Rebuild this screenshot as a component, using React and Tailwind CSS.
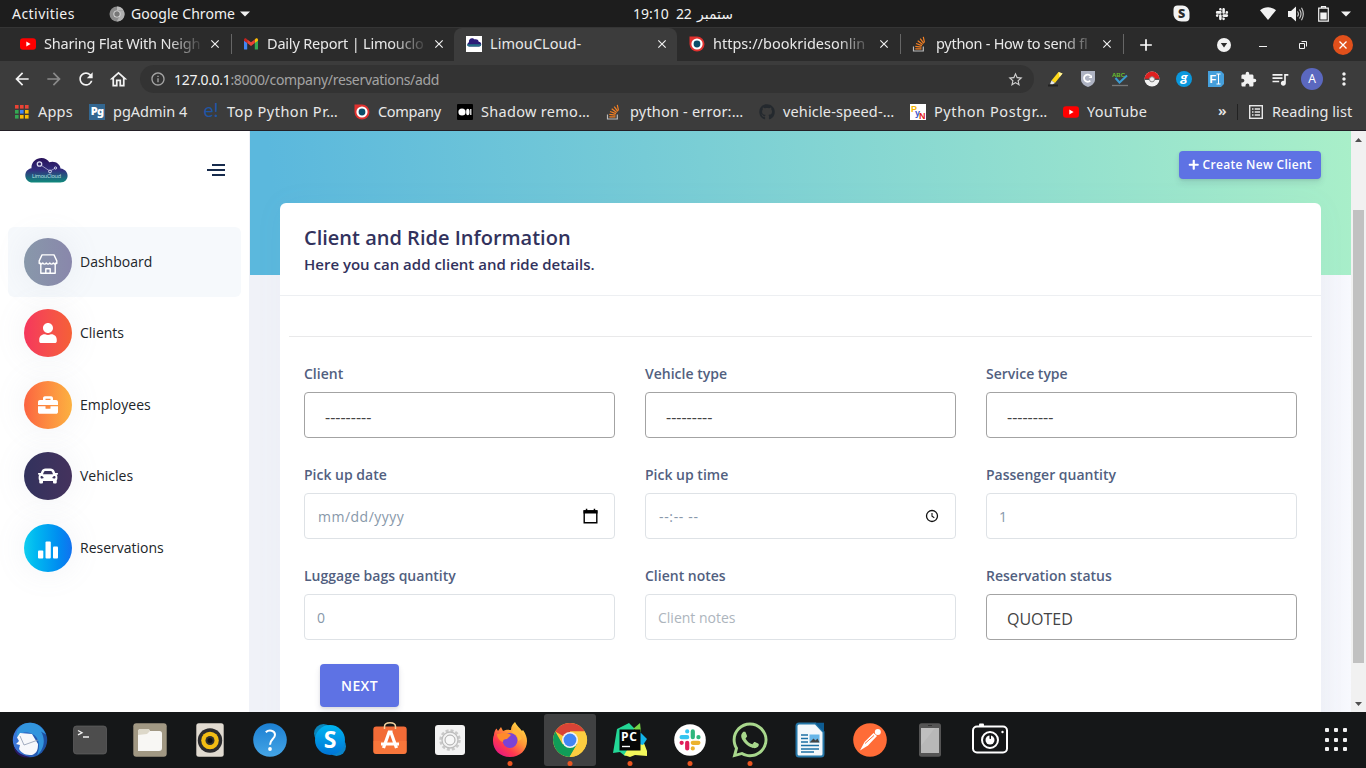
import React from "react";
import { FaPlus, FaUser, FaBriefcase, FaCar, FaGithub, FaSlack, FaWhatsapp } from "react-icons/fa";
import { MdArrowBack, MdArrowForward, MdRefresh, MdOutlineHome, MdInfoOutline, MdStarBorder, MdExtension, MdQueueMusic, MdMoreVert, MdClose, MdAdd } from "react-icons/md";

const UI = "font-['Noto_Sans','Open_Sans',sans-serif]";
const PAGE = "font-['Open_Sans','Noto_Sans',sans-serif]";

/* ---------- small site icons ---------- */
const YouTube = () => (
  <svg width="16" height="16" viewBox="0 0 16 16">
    <rect x="0" y="2.2" width="16" height="11.6" rx="3" fill="#f00" />
    <path d="M6.3 5.6v4.8L10.6 8z" fill="#fff" />
  </svg>
);
const Gmail = () => (
  <svg width="16" height="16" viewBox="0 0 16 16">
    <path d="M1 4.5v8.4c0 .3.3.6.6.6h2.6V6.6z" fill="#4285f4" />
    <path d="M15 4.5v8.4c0 .3-.3.6-.6.6h-2.6V6.6z" fill="#34a853" />
    <path d="M11.8 3.6V7L15 4.7V3.9c0-1.4-1.4-2-2.4-1.2z" fill="#fbbc04" />
    <path d="M4.2 7.1V3.4L8 6.3l3.8-2.9v3.7L8 9.9z" fill="#ea4335" />
    <path d="M1 4.7V3.9c0-1.4 1.4-2 2.4-1.2l.8.7v3.7z" fill="#c5221f" />
  </svg>
);
const CloudMini = () => (
  <svg width="16" height="16" viewBox="0 0 16 16">
    <rect width="16" height="16" fill="#fff" />
    <path d="M3.2 10.6A2.3 2.3 0 0 1 3 6.2 3.2 3.2 0 0 1 6 2.2c1.400 0 2.200.6 2.700 1.300C10.500 3 12.300 3.700 12.700 5.800 16 6 16 10.600 13 10.600z" fill="#2b1d78" />
    <path d="M1 8.300h14.200c0 1.300-.8 2.300-2.200 2.300H3.200C1.800 10.600 1 9.600 1 8.300z" fill="#246f86" />
  </svg>
);
const Ring = () => (
  <svg width="16" height="16" viewBox="0 0 16 16">
    <path d="M0.500 0.500H8a7.500 7.500 0 1 1-7.500 7.500z" fill="#e0312f" />
    <circle cx="8" cy="8" r="5.600" fill="#fff" />
    <circle cx="8" cy="8" r="3.400" fill="#0c4d68" />
  </svg>
);
const Stack = () => (
  <svg width="16" height="16" viewBox="0 0 16 16" fill="none">
    <path d="M1.500 10.500v4.500h9.800v-4.500" stroke="#bbb" strokeWidth="1.200" />
    <path d="M3.300 12.800h6.200M3.300 10.300l6.200 .8M4 7.500l5.900 2.100M5.700 4.800l5 3.700M8.200 2.600l3.600 4.800M11.300 .8l1.200 5.700" stroke="#f48024" strokeWidth="1.200" />
  </svg>
);
const Apps = () => (
  <svg width="16" height="16" viewBox="0 0 16 16">
    {["#ea4335", "#ea4335", "#ea4335", "#34a853", "#4285f4", "#fbbc04", "#34a853", "#fbbc04", "#fbbc04"].map((c, i) => (
      <rect key={i} x={1 + (i % 3) * 5} y={1 + Math.floor(i / 3) * 5} width="3.600" height="3.600" fill={c} />
    ))}
  </svg>
);
const PgAdmin = () => <span className="flex size-4 items-center justify-center bg-[#336791] pb-0.5 text-[11px] leading-none font-black tracking-[-0.8px] text-white">Pg</span>;
const Euro = () => <span className="-mt-1 w-4 text-center font-['Lato'] text-[19px] leading-4 text-[#1f56a5]">e!</span>;
const Medium = () => (
  <svg width="16" height="16" viewBox="0 0 16 16">
    <rect width="16" height="16" rx="1" fill="#000" />
    <circle cx="5" cy="8" r="3.600" fill="#fff" />
    <ellipse cx="10.800" cy="8" rx="1.700" ry="3.300" fill="#fff" />
    <rect x="13.200" y="5" width="1.200" height="6" fill="#fff" />
  </svg>
);
const PyN = () => (
  <svg width="16" height="16" viewBox="0 0 16 16" fontFamily="Liberation Sans" fontWeight="700">
    <rect width="16" height="16" fill="#fff" />
    <text x="1" y="8" fontSize="9" fill="#f5b400">P</text>
    <text x="5" y="11.500" fontSize="9" fill="#3d55cc">y</text>
    <text x="9" y="15" fontSize="9" fill="#e02020">N</text>
  </svg>
);

/* ---------- desktop top bar ---------- */
const SkypeTile = () => (
  <svg width="17" height="17" viewBox="0 0 17 17">
    <path d="M4.500.5h5C13 .5 16.500 3.500 16.500 8v4.500c0 2.500-1.500 4-4 4h-4C4 16.500.5 13 .5 9V4.500c0-2.500 1.500-4 4-4z" fill="#f2f2f2" />
    <text x="8.500" y="13" textAnchor="middle" fontSize="12.500" fontWeight="800" fontFamily="Open Sans" fill="#2b2b2b">S</text>
  </svg>
);
const TopBar = () => (
  <div className="flex h-[27px] shrink-0 items-center bg-[#1d1d1d] text-[14px] text-[#f2f2f2]">
    <div className="flex w-[633px] shrink-0 items-center pl-3">
      <span className="w-[97px] tracking-[0.450px]">Activities</span>
      <svg width="16" height="16" viewBox="0 0 16 16">
        <circle cx="8" cy="8" r="7.500" fill="#8b8b8b" />
        <path d="M8 .5a7.500 7.500 0 0 1 6.700 4H8z" fill="#bbb" />
        <path d="M14.800 4.700A7.500 7.500 0 0 1 7.600 15.500L11 9.500V4.700z" fill="#b0b0b0" />
        <circle cx="8" cy="8" r="3.600" fill="#ddd" />
        <circle cx="8" cy="8" r="2.700" fill="#777" />
      </svg>
      <span className="ml-1.5 w-[109px] tracking-[0.050px]">Google Chrome</span>
      <svg width="10" height="6" viewBox="0 0 10 6"><path d="M0 .5h10L5 5.500z" fill="#f2f2f2" /></svg>
    </div>
    <div className="flex w-[534px] shrink-0 items-center whitespace-nowrap">
      <span className="w-[43px]">19:10</span>
      <span className="w-[21px] tracking-[-0.300px]">22</span>
      <span className="font-['DejaVu_Sans'] text-[14px] leading-5" dir="rtl">ستمبر</span>
    </div>
    <div className="flex shrink-0 items-center pl-1.5">
      <span className="w-[42px]"><SkypeTile /></span>
      <span className="w-[45px]"><FaSlack size={14} color="#f2f2f2" /></span>
    </div>
    <div className="flex shrink-0 items-center gap-3">
      <svg width="16" height="13" viewBox="0 0 16 13"><path d="M0 3.300C4.500-.8 11.500-.8 16 3.300L8 13z" fill="#f2f2f2" /></svg>
      <svg width="16" height="16" viewBox="0 0 16 16" fill="none">
        <path d="M0 5h3l5-4.500v15L3 11H0z" fill="#f2f2f2" />
        <path d="M9.500 5.500q1.800 2.500 0 5M11.500 3.500q3 4.500 0 9M13.500 1.800q3.600 6.200 0 12.400" stroke="#d0d0d0" strokeWidth="1.100" />
      </svg>
      <svg width="11" height="16" viewBox="0 0 11 16" className="ml-0.5">
        <path d="M3.500 2V.7h4V2M.7 2.200h9.600v13H.7z" fill="none" stroke="#f2f2f2" strokeWidth="1.200" />
        <rect x="2.300" y="6.500" width="6.400" height="7" fill="#f2f2f2" />
      </svg>
      <svg width="10" height="6" viewBox="0 0 10 6"><path d="M0 .5h10L5 5.500z" fill="#f2f2f2" /></svg>
    </div>
  </div>
);

/* ---------- tab strip ---------- */
const tabs = [
  { icon: <YouTube />, title: "Sharing Flat With Neigh", tracking: "tracking-[-0.200px]", sep: true },
  { icon: <Gmail />, title: "Daily Report | Limouclo", tracking: "tracking-[-0.200px]" },
  { icon: <CloudMini />, title: "LimouCLoud-", tracking: "tracking-[0.050px]", active: true },
  { icon: <Ring />, title: "https://bookridesonlin", tracking: "tracking-[0px]", sep: true },
  { icon: <Stack />, title: "python - How to send fl", tracking: "tracking-[-0.280px]", sep: true },
];
const Tab = ({ icon, title, tracking, sep, active }) => (
  <div className={"flex h-[34px] w-[223px] shrink-0 items-center pb-px pl-3 " + (active ? "rounded-t-lg bg-[#3c3c3c]" : "")}>
    <span className="w-6 shrink-0">{icon}</span>
    <span className={"w-[160px] whitespace-nowrap text-[14.500px] " + tracking + (active ? "" : " mask-[linear-gradient(to_right,#000_78%,transparent_101%)]")}>{title}</span>
    <MdClose size={14} className="ml-[5px] shrink-0" color="#f2f2f2" />
    {sep && <span className="-mr-px ml-[9px] h-5 w-px shrink-0 bg-[#666]" />}
  </div>
);
const TabStrip = () => (
  <div className="flex h-[34px] shrink-0 items-center border-t border-[#353535] bg-[#2b2b2b] pl-2 text-[#e8e8e8]">
    {tabs.map((t) => <Tab key={t.title} {...t} />)}
    <div className="ml-[13px] w-[82px] shrink-0"><MdAdd size={20} className="text-white" /></div>
    <div className="ml-[-1px] flex shrink-0 items-center">
      <svg width="14" height="14" viewBox="0 0 14 14"><circle cx="7" cy="7" r="7" fill="#f2f2f2" /><path d="M3.800 5h6.400L7 9.500z" fill="#2b2b2b" /></svg>
      <span className="mt-1 ml-7 h-px w-2 bg-[#f2f2f2]" />
      <svg width="8" height="8" viewBox="0 0 8 8" className="ml-8" fill="none" stroke="#f2f2f2"><path d="M.5 2.500h5v5h-5zM2.500 .5h5v5" /></svg>
      <svg width="20" height="20" viewBox="0 0 20 20" className="ml-[26px]"><circle cx="10" cy="10" r="10" fill="#e1501b" /><path d="M6.500 6.500l7 7M13.500 6.500l-7 7" stroke="#fff" strokeWidth="1.300" /></svg>
    </div>
  </div>
);

/* ---------- toolbar ---------- */
const Cell = ({ children }) => <span className="flex w-8 shrink-0 items-center justify-center">{children}</span>;
const extensions = [
  <svg width="16" height="16" viewBox="0 0 16 16"><path d="M3.500 9.500L10.500 1l4 1.500-7.500 9.500z" fill="#ffd91a" /><path d="M3.500 9.500l3.500 2.500-2.500 1.500-2.500-.2z" fill="#e8e8e8" /><path d="M10.500 1l4 1.500-3 3.700z" fill="#fff29c" /><path d="M0 14.500h10" stroke="#222" strokeWidth="2" /></svg>,
  <svg width="16" height="16" viewBox="0 0 16 16"><path d="M1 0h14v8.500c0 4-4 6.500-7 7.500-3-1-7-3.500-7-7.500z" fill="#aeb3c2" /><path d="M10.500 5A3.600 3.600 0 1 0 10.300 9.600" fill="none" stroke="#fff" strokeWidth="1.800" /><path d="M8.500 7h3.500v-3z" fill="#fff" /></svg>,
  <svg width="16" height="16" viewBox="0 0 16 16"><text x="0" y="5.500" fontSize="6" fontWeight="700" fontFamily="Liberation Sans" fill="#6abf2e">ABC</text><path d="M3.500 7l4 4.500L15 4.500" fill="none" stroke="#3b9bd0" strokeWidth="2" /><path d="M0 14.500h16" stroke="#777" strokeWidth="1.300" /></svg>,
  <svg width="16" height="16" viewBox="0 0 16 16"><circle cx="8" cy="8" r="7.500" fill="#f2f2f2" /><path d="M.5 8a7.500 7.500 0 0 1 15 0z" fill="#df2020" /><path d="M.5 8.300h15" stroke="#444" strokeWidth="1.200" /><circle cx="8" cy="8.300" r="2.600" fill="#eee" stroke="#888" /></svg>,
  <svg width="16" height="16" viewBox="0 0 16 16"><circle cx="8" cy="8" r="8" fill="#0a98dd" /><text x="8" y="11.300" textAnchor="middle" fontSize="14" fontWeight="900" fontStyle="italic" fontFamily="Lato" fill="#fff">g</text></svg>,
  <svg width="16" height="16" viewBox="0 0 16 16"><path d="M0 0h13l3 3v10l-3 3H0z" fill="#459fdb" /><text x="1.500" y="12" fontSize="11" fontWeight="700" fontFamily="Liberation Sans" fill="#fff">F</text><path d="M8.500 3h4M10.500 3v10M8.500 13h4" stroke="#fff" fill="none" /></svg>,
  <MdExtension size={17} color="#f2f2f2" />,
  <MdQueueMusic size={20} color="#f2f2f2" />,
  <span className="flex size-[22px] items-center justify-center rounded-full bg-[#5b68bf] text-[12px] leading-none text-white">A</span>,
  <MdMoreVert size={20} color="#f2f2f2" />,
];
const Toolbar = () => (
  <div className="flex h-9 shrink-0 items-center bg-[#3c3c3c] pl-1.5">
    <Cell><MdArrowBack size={20} color="#f2f2f2" /></Cell>
    <Cell><MdArrowForward size={20} color="#8a8a8a" /></Cell>
    <Cell><MdRefresh size={20} color="#f2f2f2" /></Cell>
    <Cell><MdOutlineHome size={21} color="#f2f2f2" /></Cell>
    <div className="ml-1.5 flex h-7 w-[894px] items-center rounded-full bg-[#333] pr-2.5 pl-2.5">
      <MdInfoOutline size={16} color="#a5a5a5" />
      <span className="ml-2 text-[14px] tracking-[-0.320px] text-[#a3a3a3]"><span className="text-[#f2f2f2]">127.0.0.1</span>:8000/company/reservations/add</span>
      <MdStarBorder size={17} className="ml-auto" color="#d0d0d0" />
    </div>
    <div className="ml-1.5 flex">{extensions.map((e, i) => <Cell key={i}>{e}</Cell>)}</div>
  </div>
);

/* ---------- bookmarks ---------- */
const bookmarks = [
  [<Apps />, "Apps", "w-[75px]", "tracking-[0.200px]"],
  [<PgAdmin />, "pgAdmin 4", "w-[114px]", "tracking-[0px]"],
  [<Euro />, "Top Python Pr…", "w-[151px]", "tracking-[0.500px]"],
  [<Ring />, "Company", "w-[103px]", "tracking-[-0.300px]"],
  [<Medium />, "Shadow remo…", "w-[149px]", "tracking-[0.300px]"],
  [<Stack />, "python - error:…", "w-[153px]", "tracking-[0.200px]"],
  [<FaGithub size={16} color="#24292e" />, "vehicle-speed-…", "w-[151px]", "tracking-[0.150px]"],
  [<PyN />, "Python Postgr…", "w-[153px]", "tracking-[0.580px]"],
  [<YouTube />, "YouTube", "w-[155px]", "tracking-[0.200px]"],
];
const Bookmarks = () => (
  <div className="flex h-[34px] shrink-0 items-center border-b border-[#231f26] bg-[#3c3c3c] pb-1 pl-[14px] text-[14.500px] whitespace-nowrap text-[#e8e8e8]">
    {bookmarks.map(([icon, label, w, tr]) => (
      <div key={label} className={"flex shrink-0 items-center gap-2 " + w}>
        {icon}<span className={tr}>{label}</span>
      </div>
    ))}
    <span className="w-[19px] shrink-0 pb-0.5 text-[15px] leading-none font-semibold">»</span>
    <span className="mr-[11px] h-4 w-px shrink-0 bg-[#222]" />
    <svg width="14" height="14" viewBox="0 0 14 14" fill="none" stroke="#e8e8e8" className="shrink-0"><rect x=".7" y=".7" width="12.600" height="12.600" strokeWidth="1.400" /><path d="M3 4h1.500M3 7h1.500M3 10h1.500M5.700 4H11M5.700 7H11M5.700 10H11" strokeWidth="1.500" /></svg>
    <span className="ml-[9px] tracking-[0.080px]">Reading list</span>
  </div>
);

/* ---------- web page ---------- */
const Logo = () => (
  <svg width="44" height="28" viewBox="0 0 44 28">
    <defs><linearGradient id="cloud" x1="0" y1="0" x2="0" y2="1"><stop offset="0" stopColor="#271058" /><stop offset=".5" stopColor="#33307f" /><stop offset="1" stopColor="#0f8a7c" /></linearGradient></defs>
    <path d="M8 26.500C-2 26.500-2 13.500 6.500 12.300 6 6.500 11 2 16.500 2c3.500 0 6.300 1.700 7.800 4.300C29.500 4.300 35 7.500 35.500 12.500c9.500 1 9.500 14-.3 14z" fill="url(#cloud)" />
    <g fill="none" stroke="#d9daf0"><circle cx="14.500" cy="8" r="2.200" strokeWidth="1.300" /><circle cx="25" cy="15.500" r="1.400" /><circle cx="30.500" cy="12" r="1.100" /><path d="M16.500 9.500l7.500 5M26 14.500l3.600-2" strokeWidth=".6" /></g>
    <text x="21.500" y="22.300" textAnchor="middle" fontSize="5.500" fontFamily="Open Sans" fill="#b9e2e6" textLength="29">LimouCloud</text>
  </svg>
);
const Shop = () => (
  <svg width="20" height="20" viewBox="0 0 20 20" fill="none" stroke="#fff" strokeWidth="1.400" strokeLinejoin="round" className="mt-1">
    <path d="M4 .9h12l2.800 6v2.300h-1.600v10H2.800v-10H1.200V6.900z" />
    <path d="M1.200 9q1.800 2.300 3.600 0 1.700 2.300 3.500 0 1.700 2.300 3.500 0 1.700 2.300 3.500 0 1.700 2.300 3.500 0" />
    <path d="M7.800 19.200v-4.500h4.400v4.500" />
  </svg>
);
const Bars = () => (
  <svg width="20" height="18" viewBox="0 0 20 18" fill="#fff" className="mt-1"><rect y="9.500" width="5.300" height="8" rx="1" /><rect x="7.500" y=".5" width="5.300" height="17" rx="1" /><rect x="15" y="5.500" width="5" height="12" rx="1" /></svg>
);
const nav = [
  ["Dashboard", <Shop />, "from-[#8898aa] to-[#8987ab]"],
  ["Clients", <FaUser size={20} color="#fff" />, "from-[#f5365c] to-[#f56036]"],
  ["Employees", <FaBriefcase size={20} color="#fff" />, "from-[#fb6340] to-[#fbb140]"],
  ["Vehicles", <FaCar size={20} color="#fff" />, "from-[#32325d] to-[#44325d]"],
  ["Reservations", <Bars />, "from-[#11cdef] to-[#1171ef]"],
];
const Sidebar = () => (
  <aside className="flex w-[249px] shrink-0 flex-col bg-white">
    <div className="flex h-[95.600px] shrink-0 items-start justify-between pt-[25px] pr-6 pl-[25px]">
      <Logo />
      <div className="mt-2 flex flex-col items-end gap-[3px]">
        <i className="h-0.5 w-[13px] bg-[#172b4d]" />
        <i className="h-0.5 w-[18px] bg-[#172b4d]" />
        <i className="h-0.5 w-[13px] bg-[#172b4d]" />
      </div>
    </div>
    <nav className="flex flex-col gap-[1.600px] px-2">
      {nav.map(([label, icon, grad], i) => (
        <a key={label} className={"flex h-[70px] items-center gap-2 rounded-md pl-4 text-[14px] text-[#212529] " + (i === 0 ? "bg-[#f6f9fc]" : "")}>
          <span className={"flex size-12 items-center justify-center rounded-full bg-linear-to-r shadow-[0_0_32px_rgba(136,152,170,0.120)] " + grad}>{icon}</span>
          <span className="pb-px">{label}</span>
        </a>
      ))}
    </nav>
  </aside>
);
const Select = ({ value }) => (
  <div className="flex h-[46px] items-center rounded-[4px] border border-[#a3a3a3] bg-white pt-1 pl-5 text-[16px] text-[#444]">{value}</div>
);
const Input = ({ value, tone = "text-[#8898aa]", icon, pad = "pl-3" }) => (
  <div className={"flex h-[46px] items-center justify-between rounded-[4px] border border-[#dee2e6] bg-white pr-4 text-[14px] " + tone + " " + pad}>
    <span className="pt-px">{value}</span>{icon}
  </div>
);
const Calendar = () => (
  <svg width="15" height="16" viewBox="0 0 15 16"><path d="M1.200 3h12.600v11.700H1.200z" fill="none" stroke="#000" strokeWidth="1.400" /><path d="M.5 2.300h14V5.500H.5zM2.800.7h1.500v2H2.800zM10.700.7h1.500v2h-1.500z" fill="#000" /></svg>
);
const Clock = () => (
  <svg width="14" height="14" viewBox="0 0 14 14" fill="none" stroke="#111"><circle cx="7" cy="7" r="5.500" strokeWidth="1.300" /><path d="M7 4v3.300l2.300 1.500" strokeWidth="1.100" /></svg>
);
const Field = ({ label, children }) => (
  <div className="flex h-[101px] flex-col">
    <label className="mb-2 h-[21px] text-[14px] leading-[21px] font-semibold text-[#525f7f]">{label}</label>
    {children}
  </div>
);
const Page = () => (
  <div className={"flex h-[581px] shrink-0 overflow-hidden " + PAGE}>
    <Sidebar />
    <main className="flex w-[1102px] shrink-0 flex-col bg-linear-to-r from-[#f0f2f8] via-[#f0f2f8] via-97% to-[#f8f9fe] pl-px">
      <div className="flex h-36 shrink-0 justify-end bg-[linear-gradient(83deg,#5bb8dd_3%,#a9efc9_100%)] pt-5 pr-[30px]">
        <button className="flex h-7 w-[142px] items-center justify-center gap-[3px] rounded-[4px] bg-[#5e72e4] text-[12px] font-semibold tracking-[0.300px] whitespace-nowrap text-white shadow-[0_4px_6px_rgba(50,50,93,0.110),0_1px_3px_rgba(0,0,0,0.080)]">
          <FaPlus size={11.500} />Create New Client
        </button>
      </div>
      <section className="mx-[30px] -mt-[72px] flex h-[560px] shrink-0 flex-col rounded-md bg-white shadow-[0_0_32px_rgba(136,152,170,0.040)]">
        <header className="h-[93px] border-b border-[#edeff2] px-6 pt-[21px] text-[#32325d]">
          <h3 className="text-[20px] leading-7 font-semibold">Client and Ride Information</h3>
          <p className="text-[15px] leading-[25px] font-semibold">Here you can add client and ride details.</p>
        </header>
        <hr className="mx-[9px] mt-10 border-[#e9e9ea]" />
        <form className="grid grid-cols-3 gap-x-[30px] px-6 pt-[26px]">
          <Field label="Client"><Select value="---------" /></Field>
          <Field label="Vehicle type"><Select value="---------" /></Field>
          <Field label="Service type"><Select value="---------" /></Field>
          <Field label="Pick up date"><Input value={<span className="tracking-[0.500px]">mm/dd/yyyy</span>} icon={<Calendar />} pad="pl-[13px]" /></Field>
          <Field label="Pick up time"><Input value={<span className="tracking-[0.650px]">--:-- --</span>} icon={<Clock />} pad="pl-[13px]" /></Field>
          <Field label="Passenger quantity"><Input value="1" /></Field>
          <Field label="Luggage bags quantity"><Input value="0" /></Field>
          <Field label="Client notes"><Input value="Client notes" tone="text-[#adb5bd]" /></Field>
          <Field label="Reservation status"><Select value="QUOTED" /></Field>
        </form>
        <button className="mt-[-2px] ml-10 h-[43px] w-[79px] shrink-0 rounded-[4px] bg-[#5e72e4] text-[14px] font-semibold tracking-[0.350px] text-white shadow-[0_4px_6px_rgba(50,50,93,0.110),0_1px_3px_rgba(0,0,0,0.080)]">NEXT</button>
      </section>
    </main>
    <div className="flex w-[15px] shrink-0 flex-col items-center bg-[#f1f1f1] pt-[7px]">
      <svg width="7" height="4" viewBox="0 0 7 4" className="shrink-0"><path d="M3.500 0L7 4H0z" fill="#505050" /></svg>
      <span className="mt-[68px] ml-[-1px] h-[453px] w-[11px] shrink-0 bg-[#c1c1c1]" />
      <svg width="7" height="4" viewBox="0 0 7 4" className="mt-[39px] shrink-0"><path d="M3.500 4L7 0H0z" fill="#505050" /></svg>
    </div>
  </div>
);

/* ---------- dock ---------- */
const S = ({ children }) => <svg width="36" height="36" viewBox="0 0 36 36">{children}</svg>;
const dock = [
  { n: "mail", i: <S><defs><linearGradient id="tb" x1="0" x2="1"><stop stopColor="#3c78dc" /><stop offset="1" stopColor="#1a4c9c" /></linearGradient></defs><circle cx="18" cy="18" r="17.200" fill="url(#tb)" /><path d="M13 1.500c10-3 18 3 21 11l-5-3c5 8 3 18-4 24 4-11 2-21-9-23-5-1-9 2-11 5C3 9 8 3 13 1.500z" fill="#3295dd" /><path d="M5 15.500L8 11l12 1 6 10c0 6-1 9-6 11-6 0-10-1-13-6l1-4-4-1 3-3z" fill="#f7f8fb" /><path d="M8 14l4 9 14-5" fill="none" stroke="#8d99b0" strokeWidth=".8" /><path d="M1.500 24c3 6 7 9 17 11-9 2-16-3-17-11z" fill="#291763" /></S> },
  { n: "terminal", i: <S><rect x="1.500" y="4" width="33" height="28" rx="3" fill="#4d4d4d" stroke="#626262" strokeWidth=".7" /><path d="M6 8.500l4 2.200-4 2.200M11 15h6" fill="none" stroke="#f2f2f2" strokeWidth="1.300" /></S> },
  { n: "files", i: <S><rect x="1.300" y="1.300" width="33.400" height="33.400" rx="3" fill="#a19883" /><path d="M6 29V10q0-3 2.500-3h7q2 0 2.500 2h9.500q2.500 0 2.500 2.500V26q0 3-3 3z" fill="#f8f7f4" /><path d="M6 13V10q0-3 2.500-3h7q2 0 2.500 2l-3 3z" fill="#ddd8c9" /></S> },
  { n: "music", i: <S><rect x="4.300" y="1.300" width="27.400" height="33.400" rx="2.500" fill="#e1dbd1" /><circle cx="18" cy="18.500" r="12.200" fill="#2b2b2e" /><circle cx="18" cy="18.500" r="8.800" fill="#f3bd14" /><circle cx="18" cy="18.500" r="4.500" fill="#30302f" /><circle cx="18" cy="18.500" r="2.500" fill="#111" /></S> },
  { n: "help", i: <S><defs><linearGradient id="hp" x1="0" y1="0" x2="0" y2="1"><stop stopColor="#1b7fd2" /><stop offset="1" stopColor="#45a5e6" /></linearGradient></defs><circle cx="18" cy="18" r="16.800" fill="url(#hp)" /><path d="M13.800 10.300c3-3 9.200-2 9.200 2.400 0 4.300-5 4.500-5 10" fill="none" stroke="#fff" strokeWidth="2" /><circle cx="18" cy="27" r="1.900" fill="#fff" /></S> },
  { n: "skype", i: <S><defs><linearGradient id="sk" x1="0" y1="0" x2="0" y2="1"><stop stopColor="#00b5f0" /><stop offset="1" stopColor="#0074d6" /></linearGradient></defs><circle cx="11.500" cy="11.500" r="9.500" fill="#0a83b8" /><circle cx="24.500" cy="24.500" r="9.500" fill="#0a83c8" /><circle cx="18" cy="18" r="15" fill="url(#sk)" /><text x="18" y="26" textAnchor="middle" fontFamily="Open Sans" fontWeight="700" fontSize="23" fill="#fff">S</text></S> },
  { n: "store", i: <S><rect x="1.300" y="4.500" width="33.400" height="27.500" rx="3" fill="#f26b37" /><path d="M1.300 19h33.400v10q0 3-3 3H4.300q-3 0-3-3z" fill="#fb8240" opacity=".5" /><path d="M12.500 7V4.500c0-5 11-5 11 0V7" fill="none" stroke="#efcf9d" strokeWidth="1.500" /><path d="M16 10.200h4.500M11.500 26L17 10.500h2L24.500 26M9 22h18" fill="none" stroke="#fff" strokeWidth="3.200" /></S> },
  { n: "settings", i: <S><rect x="3" y="3" width="30" height="30" rx="3" fill="#f3f3f3" /><circle cx="18" cy="18" r="9.500" fill="none" stroke="#c9c9c9" strokeWidth="2.500" strokeDasharray="3 2" /><circle cx="18" cy="18" r="8" fill="none" stroke="#bdbdbd" strokeWidth="1.300" /><circle cx="18" cy="18" r="5" fill="#f8f8f8" stroke="#aaa" strokeWidth="1" /></S> },
  { n: "firefox", run: true, i: <S><defs><linearGradient id="ff" x1="1" y1="0" x2=".2" y2="1"><stop stopColor="#fff14a" /><stop offset=".45" stopColor="#ff9636" /><stop offset=".75" stopColor="#ff3750" /><stop offset="1" stopColor="#e31587" /></linearGradient></defs><path d="M2 13c0-2 1-5 2.500-6.500L6 9l3-4 2 4c4-2 6-1 8-1 0-4 2-6 4-8 2 4 5 6 7 9l1-1c3 4 4 8 4 11 0 9-7 16-17 16S1 28 1 19c0-2 0-4 1-6z" fill="url(#ff)" /><circle cx="18" cy="18.500" r="7.500" fill="#7b43d5" /><path d="M5 12c6-1 9-2 14 1l-4 4c-3 0-4 1-4 3-4-1-6-5-6-8z" fill="#ff8a2b" /><path d="M20 11c5 1 6 4 6 8l4-2c-2-5-5-9-8-12z" fill="#ffb83a" /></S> },
  { n: "chrome", run: true, active: true, i: <S><circle cx="18" cy="18" r="17" fill="#fbc937" /><path d="M18 18L3.300 9.500A17 17 0 0 1 32.700 9.500H18z" fill="#d94336" /><path d="M3.300 9.500A17 17 0 0 0 17.500 35l7.500-13L18 18l-7.400 4.200z" fill="#109d58" /><path d="M32.700 9.500H18L25.400 22 17.700 35A17 17 0 0 0 32.700 9.500z" fill="#fdcd40" /><circle cx="18" cy="18" r="8" fill="#f3f3f3" /><circle cx="18" cy="18" r="6.400" fill="#4285f4" /></S> },
  { n: "pycharm", run: true, i: <S><path d="M1 31L5 7l12-6 5 5v24l-9 4-5-4z" fill="#23d796" /><path d="M12 33l5-8 13-9 5 13v5l-12-1-5 2z" fill="#f2f75b" /><path d="M27 9l8 8-4 6-8-2z" fill="#12b4ea" /><path d="M21 7l7-6 1 9z" fill="#76d644" /><rect x="7.500" y="7.500" width="21" height="21" fill="#060606" /><text x="9" y="18.500" fontFamily="Open Sans" fontWeight="700" fontSize="12" fill="#fff" textLength="16">PC</text><path d="M10 24.500h8" stroke="#fff" strokeWidth="1.400" /></S> },
  { n: "slack", run: true, i: <S><circle cx="18" cy="18" r="15.800" fill="#fff" /><g strokeWidth="4.200" strokeLinecap="round"><path d="M15.200 9.400v.1M9.600 15.200h5.600" stroke="#36c5f0" /><path d="M20.800 9.400v5.800M26.400 15.200h.1" stroke="#2eb67d" /><path d="M20.800 20.800h5.600M20.800 26.400v.1" stroke="#ecb22e" /><path d="M15.200 20.800v5.600M9.600 20.800h.1" stroke="#e01e5a" /></g></S> },
  { n: "whatsapp", run: true, i: <FaWhatsapp size={40} color="#a8d78c" /> },
  { n: "writer", i: <S><path d="M7 1.500h16.500L31.500 10v22q0 2.500-2.500 2.500H7Q4.500 34.500 4.500 32V4q0-2.500 2.500-2.500z" fill="#f4f8fb" stroke="#2577a8" strokeWidth="2" /><path d="M23 .8h9v9.500z" fill="#0e5c92" /><path d="M9 13h7M9 16.500h7M9 20h7M9 23.500h18M9 27h18M9 30h13" stroke="#1e70a5" strokeWidth="1.300" /><rect x="17.500" y="12.500" width="10" height="8" fill="#65b5e8" /><path d="M17.500 20.500l4-4 2 2 2-2 2 4z" fill="#444" /></S> },
  { n: "postman", i: <S><circle cx="18" cy="18" r="16.800" fill="#ff6c37" /><path d="M8 28.500l4.500-8.500 9-9 3.500 3-9 9.500z" fill="#fff" /><circle cx="25.800" cy="10" r="3" fill="#fff" /><path d="M13 21.500l9-8" stroke="#ff6c37" strokeWidth="1" /></S> },
  { n: "phone", i: <S><rect x="7" y="1.300" width="22" height="33.400" rx="2.500" fill="#555" /><rect x="9" y="6" width="18" height="25" fill="#b8b8b8" /><path d="M9 6h14L9 24z" fill="#c5c5c5" opacity=".5" /><path d="M16 3.500h4" stroke="#333" /></S> },
  { n: "camera", i: <S><rect x="1" y="4.500" width="34" height="26" rx="4" fill="none" stroke="#fff" strokeWidth="2" /><rect x="7" y="1.500" width="5" height="3" rx="1" fill="#fff" /><circle cx="18" cy="18" r="8" fill="none" stroke="#fff" strokeWidth="2" /><circle cx="18" cy="18" r="4.500" fill="#fff" /><path d="M17.500 13h1.500v3.500q-.7 1-1.500 0z" fill="#151718" /><circle cx="30.500" cy="10" r="1.200" fill="#fff" /></S> },
];
const Dock = () => (
  <div className="flex h-14 shrink-0 items-start bg-[#151718]">
    {dock.map((d) => (
      <div key={d.n} className="flex h-14 w-[60px] shrink-0 flex-col items-center pt-0.5">
        <div className={"relative flex h-[52px] w-[52px] items-center justify-center rounded-[3px] " + (d.active ? "bg-[#404142]" : "")}>
          {d.i}
          {d.run && <span className="absolute bottom-0 left-1/2 size-[5px] -translate-x-1/2 rounded-full bg-[#e95420]" />}
        </div>
      </div>
    ))}
    <div className="mt-4 ml-auto grid h-6 grid-cols-3 gap-[5px] pr-[19px]">
      {Array.from({ length: 9 }, (_, i) => <span key={i} className="size-1 rounded-[1px] bg-[#f2f2f2]" />)}
    </div>
  </div>
);

export default function App() {
  return (
    <div className={"flex h-[768px] w-[1366px] flex-col overflow-hidden bg-[#151718] " + UI}>
      <TopBar />
      <TabStrip />
      <Toolbar />
      <Bookmarks />
      <Page />
      <Dock />
    </div>
  );
}
